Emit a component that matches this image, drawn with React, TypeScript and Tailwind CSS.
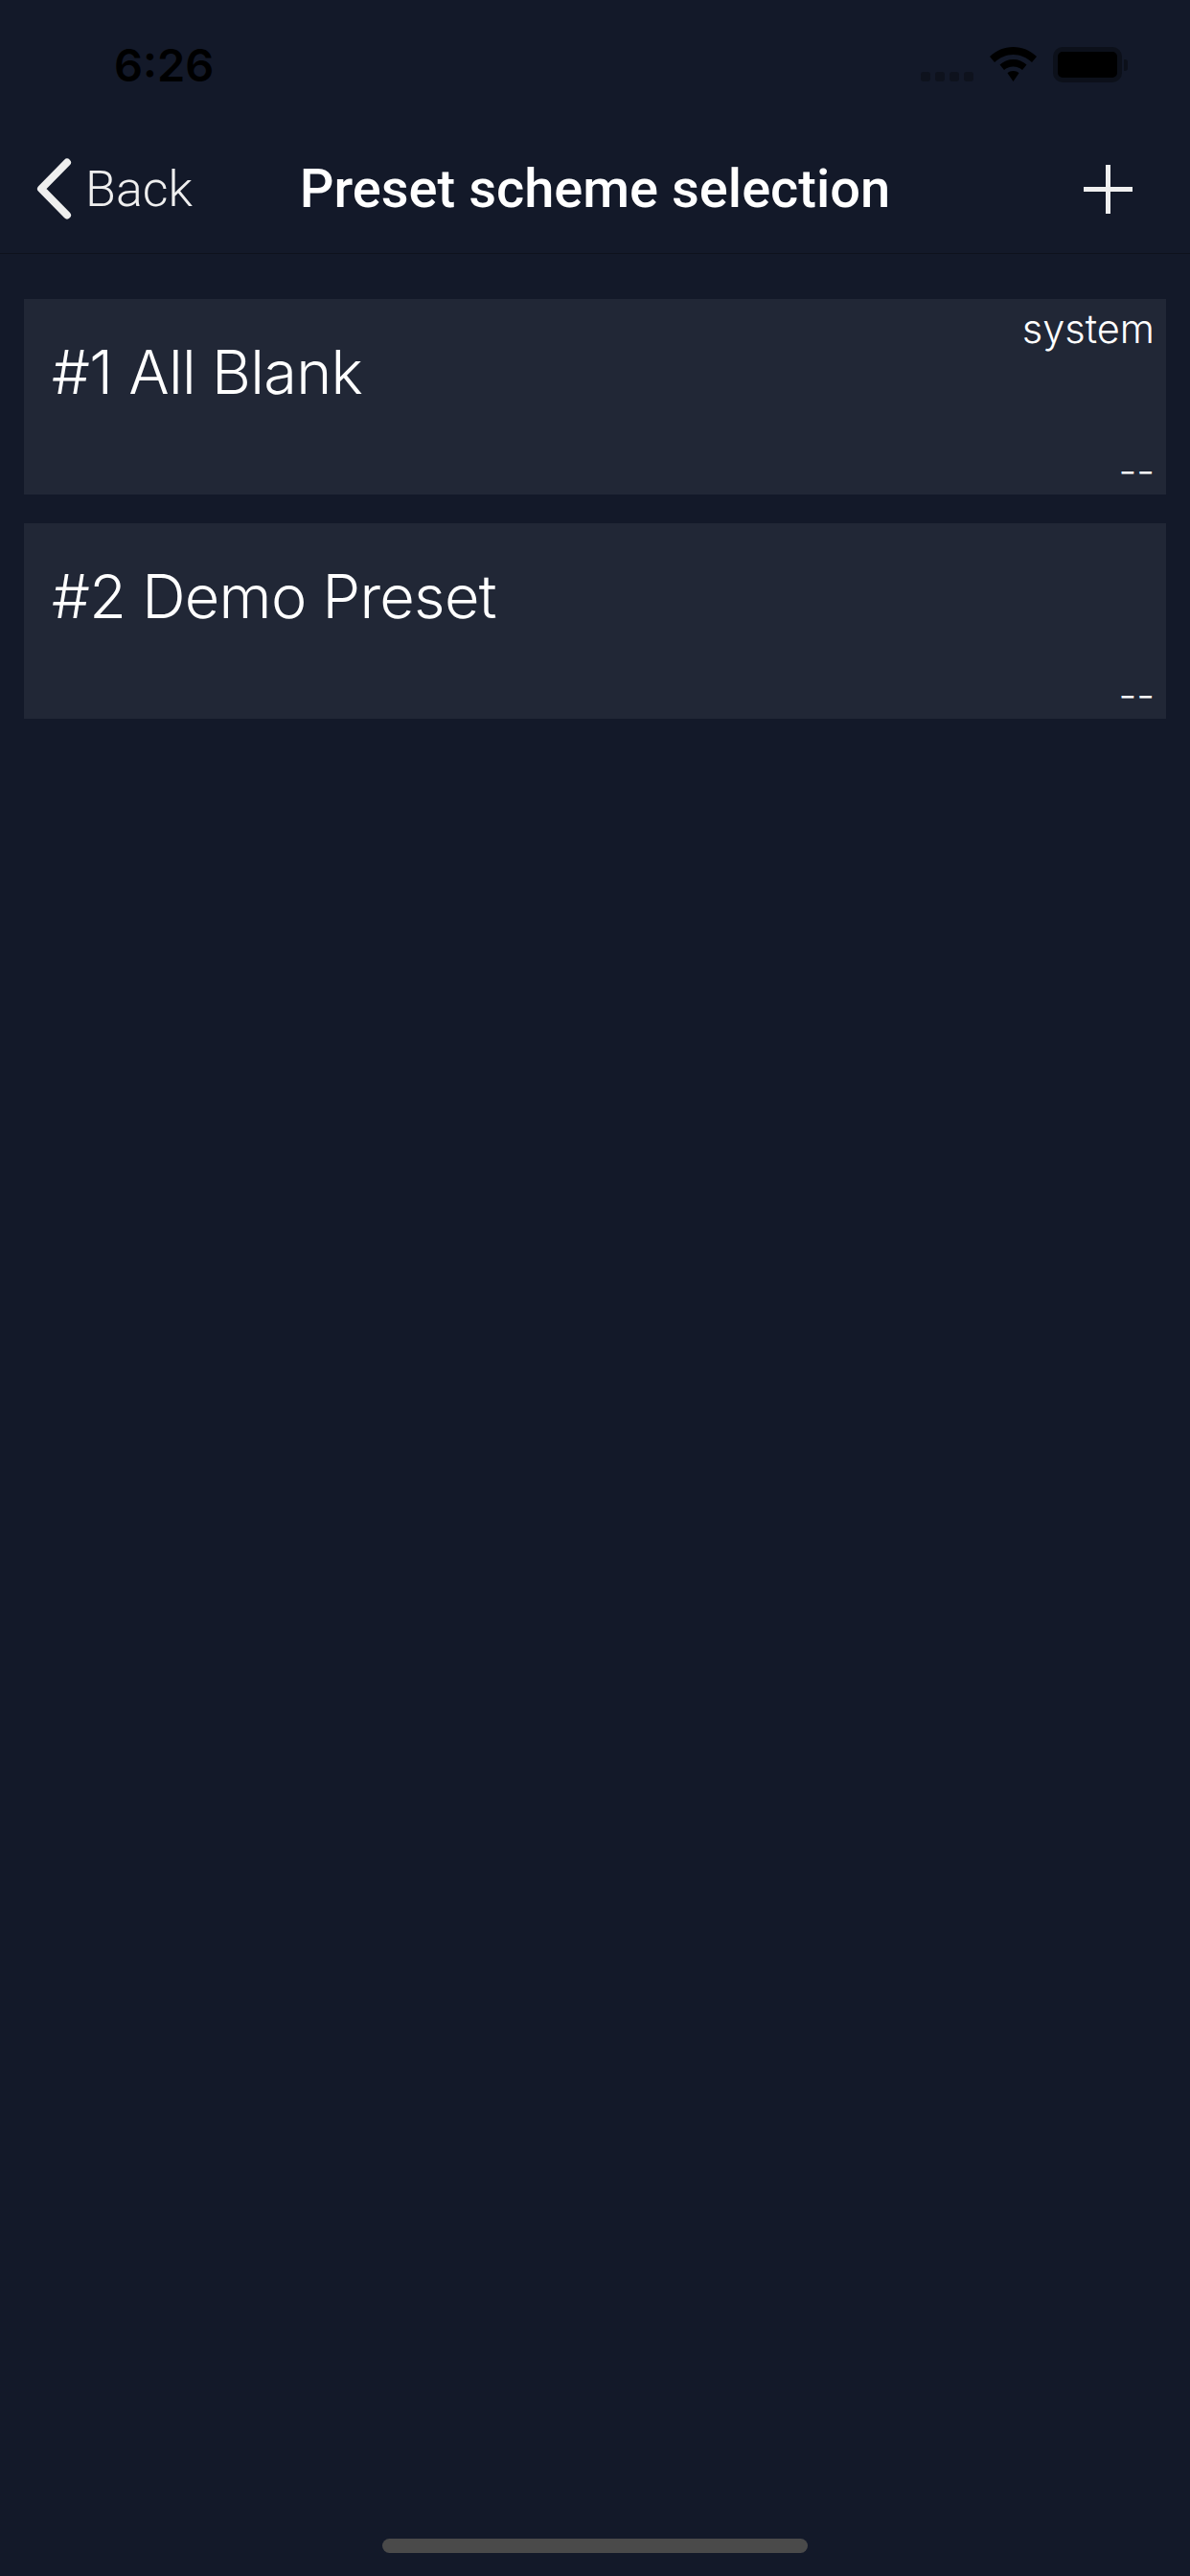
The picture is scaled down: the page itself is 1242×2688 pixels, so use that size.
const presets = [
  { id: 1, name: '#1 All Blank', tag: 'system' },
  { id: 2, name: '#2 Demo Preset', tag: '' },
]

function StatusBar() {
  return (
    <div className="flex h-[136px] items-start justify-between pt-[40px] pl-[119px] pr-[65px]">
      <span className="font-['Inter',sans-serif] text-[47px] leading-[56px] font-semibold text-black">6:26</span>
      <div className="flex items-start pt-[9px]">
        <div className="mt-[26px] mr-[17px] flex gap-[5px]">
          <span className="h-[10px] w-[10px] rounded-[3px] bg-[#0e121d]" />
          <span className="h-[10px] w-[10px] rounded-[3px] bg-[#0e121d]" />
          <span className="h-[10px] w-[10px] rounded-[3px] bg-[#0e121d]" />
          <span className="h-[10px] w-[10px] rounded-[3px] bg-[#0e121d]" />
        </div>
        <svg width="49" height="36" viewBox="0 0 49 36" className="mr-[17px]">
          <path d="M24.500 0C15 0 7 3.500 0 10l5 6c5.500-5 12-8 19.500-8S38.500 11 44 16l5-6C42 3.500 34 0 24.500 0z" fill="#000" />
          <path d="M24.500 13c-5.500 0-10 2-14 5.500l4.500 5.500c2.500-2.300 5.800-3.500 9.500-3.500s7 1.200 9.500 3.500l4.500-5.500C34.500 15 30 13 24.500 13z" fill="#000" />
          <path d="M24.500 25c-2.500 0-4.500.8-6 2.200l6 8.800 6-8.800c-1.500-1.400-3.500-2.200-6-2.200z" fill="#000" />
        </svg>
        <div className="flex items-center">
          <div className="h-[37px] w-[72px] rounded-[10px] border-[5px] border-[#0c101a] bg-black" />
          <span className="ml-[2px] h-[12px] w-[4px] rounded-r-[3px] bg-[#0c101a]" />
        </div>
      </div>
    </div>
  )
}

function NavBar() {
  return (
    <div className="relative flex h-[129px] items-center justify-between border-b border-[#0e121d] pb-[6px] pl-[38px] pr-[60px]">
      <div className="flex items-center">
        <svg width="37" height="64" viewBox="0 0 37 64" fill="none" className="mr-[14px]">
          <path d="M32 4.500L5 32l27 27.500" stroke="#efefef" strokeWidth="8" strokeLinecap="round" strokeLinejoin="round" />
        </svg>
        <span className="pt-[2px] font-['Roboto',sans-serif] text-[52px] leading-[60px] font-light text-[#efefef]">Back</span>
      </div>
      <span className="absolute left-0 right-0 text-center font-['Roboto',sans-serif] text-[56px] leading-[60px] font-medium text-white">
        Preset scheme selection
      </span>
      <svg width="51" height="51" viewBox="0 0 51 51" fill="none">
        <path d="M25.500 0v51M0 25.500h51" stroke="#efefef" strokeWidth="5" />
      </svg>
    </div>
  )
}

function PresetCard({ name, tag }: { name: string; tag: string }) {
  return (
    <div className="relative h-[204px] bg-[#212736] pl-[29px] pt-[37px] text-white">
      <div className="font-['Inter',sans-serif] text-[63px] leading-[78px] tracking-[-0.7px] font-[350]">{name}</div>
      {tag && (
        <div className="absolute right-[12px] top-[6px] font-['Inter',sans-serif] text-[41.500px] leading-[50px] font-[350]">{tag}</div>
      )}
      <div className="absolute right-[12px] bottom-[0px] font-['Inter',sans-serif] text-[41.500px] leading-[50px] font-[350]">--</div>
    </div>
  )
}

export default function App() {
  return (
    <div className="relative flex h-[2688px] w-[1242px] flex-col overflow-hidden bg-[#131929]">
      <StatusBar />
      <NavBar />
      <div className="flex flex-col gap-[30px] pl-[25px] pr-[25px] pt-[47px]">
        {presets.map((p) => (
          <PresetCard key={p.id} name={p.name} tag={p.tag} />
        ))}
      </div>
      <div className="absolute bottom-[24px] left-[399px] h-[15px] w-[444px] rounded-full bg-[#4a4a4a]" />
    </div>
  )
}
